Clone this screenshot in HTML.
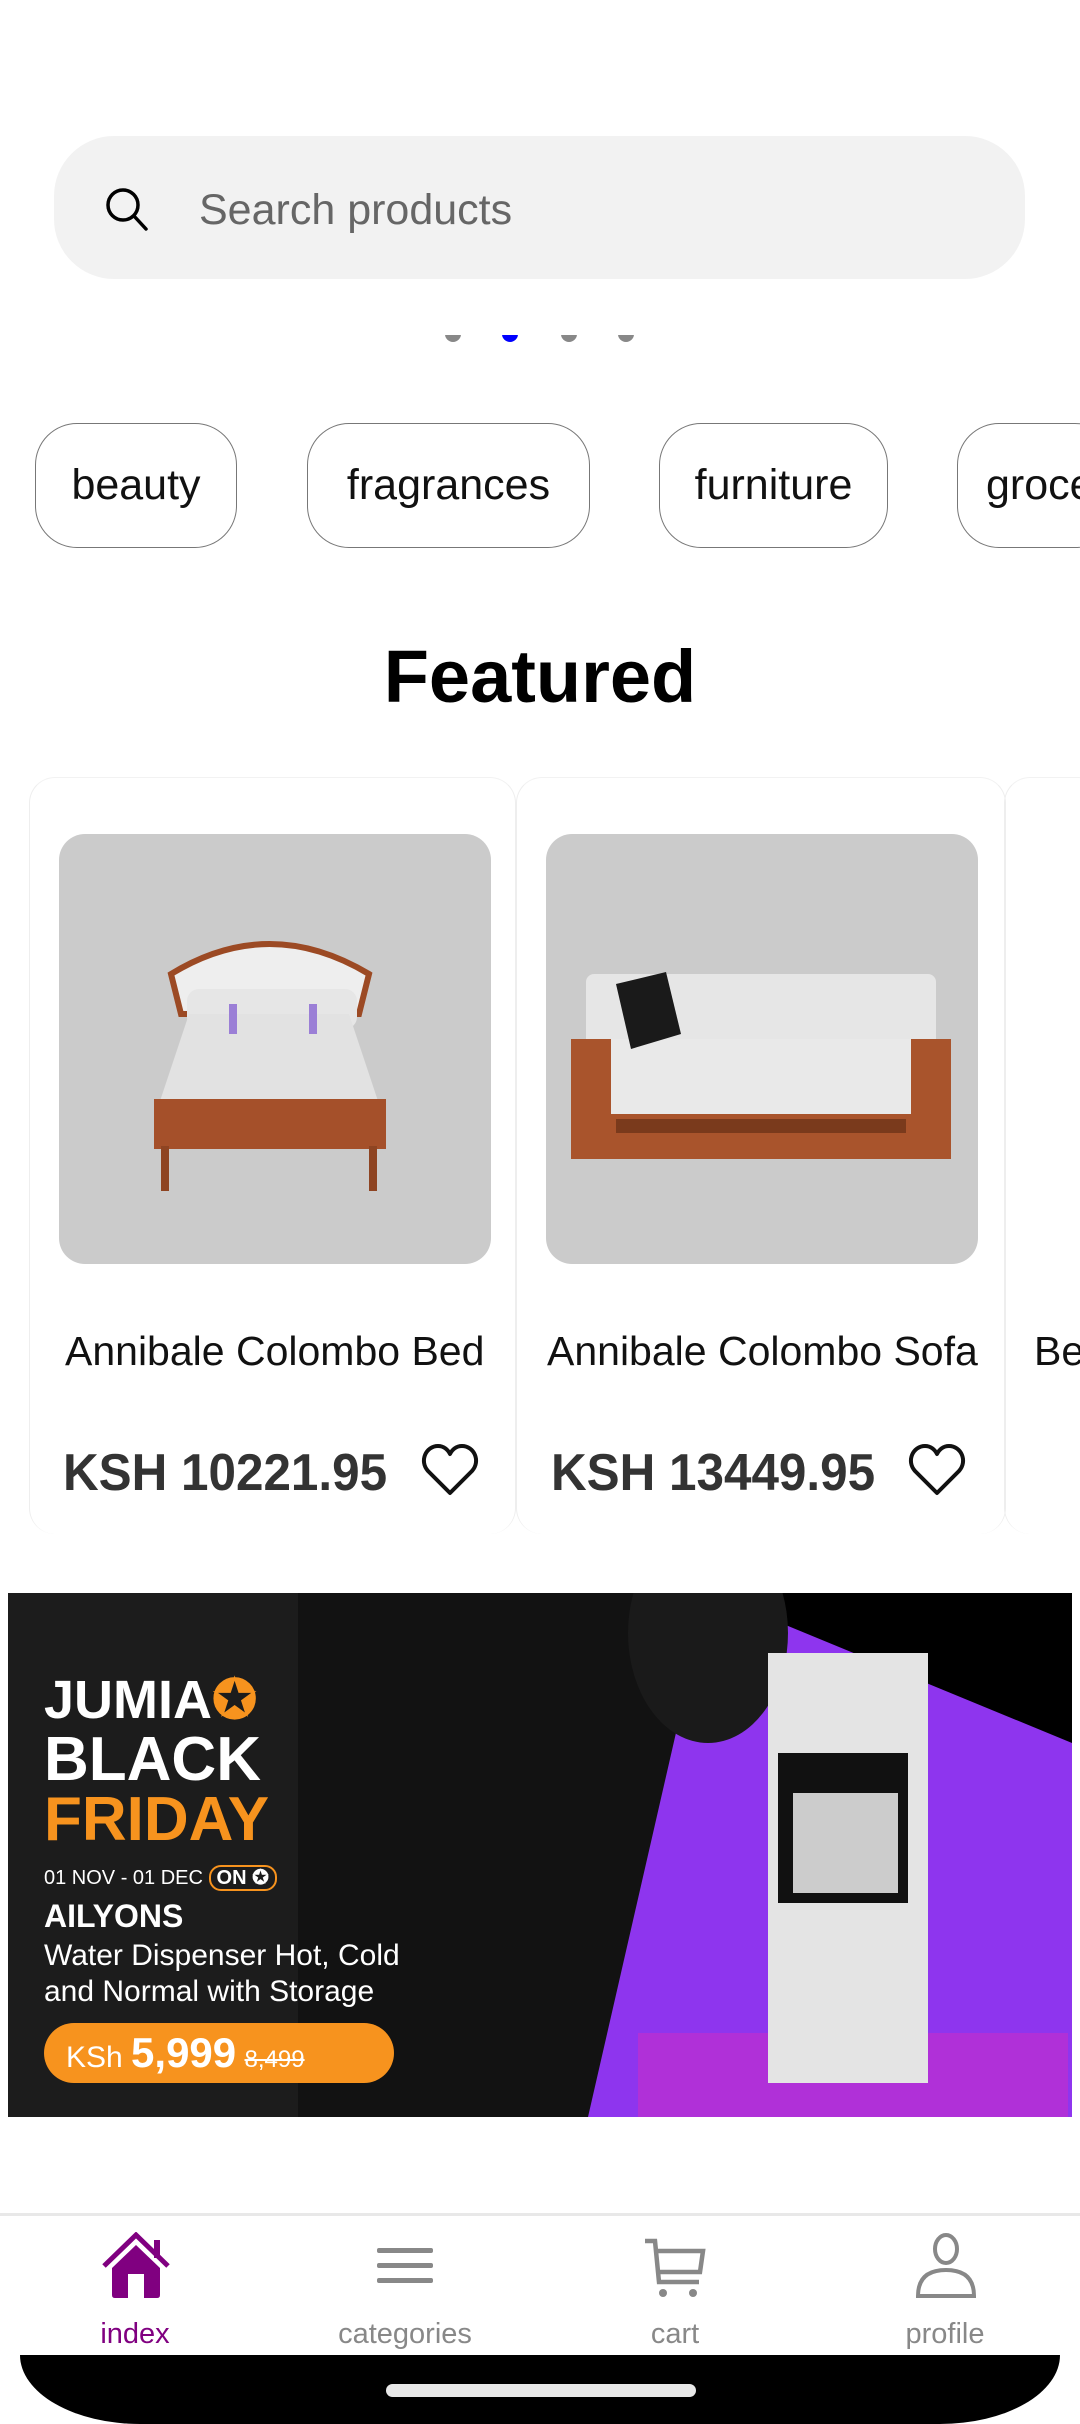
<!DOCTYPE html>
<html><head><meta charset="utf-8"><style>
*{margin:0;padding:0;box-sizing:border-box}
html,body{width:1080px;height:2424px;overflow:hidden;background:#fff;font-family:"Liberation Sans",sans-serif}
#w{position:relative;width:1080px;height:2424px;overflow:hidden}
.abs{position:absolute}
.search{left:54px;top:136px;width:971px;height:143px;background:#f2f2f2;border-radius:60px}
.search span{position:absolute;left:145px;top:50px;font-size:43px;color:#666}
.dot{top:326px;width:16px;height:16px;border-radius:50%;background:#888}
.dotclip{left:0;top:335px;width:1080px;height:20px;overflow:hidden}
.chip{top:423px;height:125px;border:1.5px solid #777;border-radius:42px;font-size:43px;line-height:122px;text-align:center;color:#111;background:#fff;white-space:nowrap;overflow:hidden}
.feat{left:0;width:1080px;top:634px;text-align:center;font-size:74px;font-weight:bold;color:#000}
.card{top:777px;height:757px;border-radius:26px;border-left:1.5px solid #eee;border-right:1.5px solid #eee;border-top:1.5px solid #f2f2f2}
.img{top:834px;width:432px;height:430px;background:#cbcbcb;border-radius:26px;overflow:hidden}
.title{top:1328px;font-size:41px;color:#111;white-space:nowrap}
.price{top:1443px;font-size:52px;font-weight:bold;color:#333;white-space:nowrap;transform:scaleX(.95);transform-origin:left}
.nav{left:0;top:2213px;width:1080px;height:142px;border-top:3px solid #e8e8e8;background:#fff}
.lbl{top:2318px;font-size:29px;color:#888;text-align:center;width:270px}
</style></head><body><div id="w">
<div class="abs search">
<svg class="abs" style="left:50px;top:50px" width="48" height="48" viewBox="0 0 48 48"><circle cx="19" cy="19" r="15" fill="none" stroke="#000" stroke-width="3.5"/><line x1="30" y1="30" x2="42" y2="43" stroke="#000" stroke-width="3.5" stroke-linecap="round"/></svg>
<span>Search products</span></div>
<div class="abs dotclip">
<div class="abs dot" style="left:445px;top:-9px"></div>
<div class="abs dot" style="left:502px;top:-9px;background:#00f"></div>
<div class="abs dot" style="left:561px;top:-9px"></div>
<div class="abs dot" style="left:618px;top:-9px"></div>
</div>
<div class="abs chip" style="left:35px;width:202px">beauty</div>
<div class="abs chip" style="left:307px;width:283px">fragrances</div>
<div class="abs chip" style="left:659px;width:229px">furniture</div>
<div class="abs chip" style="left:957px;width:160px;text-align:left;padding-left:28px">groceries</div>
<div class="abs feat">Featured</div>

<div class="abs card" style="left:29px;width:487px"></div>
<div class="abs card" style="left:516px;width:490px"></div>
<div class="abs card" style="left:1004px;width:100px"></div>

<div class="abs img" style="left:59px">
<svg width="432" height="430" viewBox="0 0 432 430">
<path d="M112 140 Q210 80 310 140 L300 180 L122 180Z" fill="#eee" stroke="#9c4a24" stroke-width="6"/>
<rect x="128" y="155" width="170" height="40" rx="12" fill="#e6e6e6"/>
<path d="M100 270 L130 180 L290 180 L320 270Z" fill="#e2e2e2"/>
<rect x="95" y="265" width="232" height="50" fill="#a5502a"/>
<rect x="102" y="312" width="8" height="45" fill="#8e4422"/><rect x="310" y="312" width="8" height="45" fill="#8e4422"/>
<rect x="170" y="170" width="8" height="30" fill="#9b7fd6"/><rect x="250" y="170" width="8" height="30" fill="#9b7fd6"/>
</svg></div>
<div class="abs img" style="left:546px">
<svg width="432" height="430" viewBox="0 0 432 430">
<rect x="40" y="140" width="350" height="90" rx="8" fill="#e6e6e6"/>
<rect x="60" y="205" width="310" height="75" fill="#e9e9e9"/>
<rect x="25" y="205" width="40" height="120" fill="#a9542c"/><rect x="365" y="205" width="40" height="120" fill="#a9542c"/>
<rect x="25" y="280" width="380" height="45" fill="#a9542c"/>
<rect x="70" y="285" width="290" height="14" fill="#7a3a1c"/>
<path d="M70 150 L120 138 L135 200 L85 215Z" fill="#1a1a1a"/>
</svg></div>

<div class="abs title" style="left:65px">Annibale Colombo Bed</div>
<div class="abs title" style="left:547px">Annibale Colombo Sofa</div>
<div class="abs title" style="left:1034px">Bed</div>
<div class="abs price" style="left:63px">KSH 10221.95</div>
<div class="abs price" style="left:551px">KSH 13449.95</div>
<svg class="abs" style="left:421px;top:1443px" width="58" height="54" viewBox="0 0 58 54"><path d="M29 50 L7 28 C-2 18 5 3 17 3 C23 3 27 7 29 11 C31 7 35 3 41 3 C53 3 60 18 51 28Z" fill="none" stroke="#111" stroke-width="4" stroke-linejoin="round"/></svg>
<svg class="abs" style="left:908px;top:1443px" width="58" height="54" viewBox="0 0 58 54"><path d="M29 50 L7 28 C-2 18 5 3 17 3 C23 3 27 7 29 11 C31 7 35 3 41 3 C53 3 60 18 51 28Z" fill="none" stroke="#111" stroke-width="4" stroke-linejoin="round"/></svg>

<div class="abs" style="left:8px;top:1593px;width:1064px;height:524px;background:#121212;overflow:hidden">
<div class="abs" style="left:0;top:0;width:290px;height:524px;background:#1c1c1c"></div>
<svg class="abs" style="left:0;top:0" width="1064" height="524"><polygon points="700,0 1064,40 1064,524 580,524" fill="#8e35ee"/><polygon points="700,0 1064,0 1064,150" fill="#000"/><ellipse cx="700" cy="40" rx="80" ry="110" fill="#1a1a1a"/><rect x="630" y="440" width="430" height="84" fill="#b030d8"/></svg>
<div class="abs" style="left:760px;top:60px;width:160px;height:430px;background:#e4e4e4"></div>
<div class="abs" style="left:770px;top:160px;width:130px;height:150px;background:#111"></div>
<div class="abs" style="left:785px;top:200px;width:105px;height:100px;background:#ccc"></div>
<div class="abs" style="left:36px;top:80px;color:#fff;font-weight:bold;font-size:54px;line-height:54px">JUMIA<span style="color:#f7931e">✪</span></div>
<div class="abs" style="left:36px;top:136px;color:#fff;font-weight:bold;font-size:62px;line-height:62px">BLACK</div>
<div class="abs" style="left:36px;top:196px;color:#f7931e;font-weight:bold;font-size:62px;line-height:62px">FRIDAY</div>
<div class="abs" style="left:36px;top:272px;color:#fff;font-size:20px">01 NOV - 01 DEC <span style="border:2px solid #f7931e;border-radius:12px;padding:0 6px;font-weight:bold">ON ✪</span></div>
<div class="abs" style="left:36px;top:305px;color:#fff;font-size:32px;font-weight:bold">AILYONS</div>
<div class="abs" style="left:36px;top:345px;color:#fff;font-size:30px;line-height:36px">Water Dispenser Hot, Cold<br>and Normal with Storage</div>
<div class="abs" style="left:36px;top:430px;width:350px;height:60px;border-radius:30px;background:#f7931e;color:#fff;font-size:30px;line-height:60px;padding-left:22px">KSh <b style="font-size:42px">5,999</b> <s style="font-size:24px">8,499</s></div>
</div>

<div class="abs nav"></div>
<svg class="abs" style="left:100px;top:2232px" width="72" height="68" viewBox="0 0 72 68"><path d="M4 34 L36 3 L68 34" fill="none" stroke="#800080" stroke-width="5"/><rect x="54" y="8" width="6" height="18" fill="#800080"/><path d="M12 36 L36 13 L60 36 L60 63 Q60 66 57 66 L44 66 L44 42 L28 42 L28 66 L15 66 Q12 66 12 63Z" fill="#800080"/></svg>
<svg class="abs" style="left:377px;top:2248px" width="56" height="36" viewBox="0 0 56 36"><rect x="0" y="0" width="56" height="5" rx="2" fill="#888"/><rect x="0" y="15" width="56" height="5" rx="2" fill="#888"/><rect x="0" y="30" width="56" height="5" rx="2" fill="#888"/></svg>
<svg class="abs" style="left:643px;top:2238px" width="64" height="62" viewBox="0 0 64 62"><path d="M2 3 L12 3 L16 44 L56 44 M14 13 L60 13 L57 34 L15 34" fill="none" stroke="#888" stroke-width="4.5"/><circle cx="20" cy="55" r="4" fill="#888"/><circle cx="50" cy="55" r="4" fill="#888"/></svg>
<svg class="abs" style="left:915px;top:2232px" width="62" height="68" viewBox="0 0 62 68"><ellipse cx="31" cy="17" rx="11" ry="14" fill="none" stroke="#888" stroke-width="4"/><path d="M3 64 Q3 38 31 38 Q59 38 59 64Z" fill="none" stroke="#888" stroke-width="4"/></svg>
<div class="abs lbl" style="left:0;color:#800080">index</div>
<div class="abs lbl" style="left:270px">categories</div>
<div class="abs lbl" style="left:540px">cart</div>
<div class="abs lbl" style="left:810px">profile</div>
<div class="abs" style="left:20px;top:2355px;width:1040px;height:69px;background:#000;border-radius:0 0 120px 120px/0 0 69px 69px"></div>
<div class="abs" style="left:386px;top:2384px;width:310px;height:13px;border-radius:7px;background:#e8e8e8"></div>
</div></body></html>
